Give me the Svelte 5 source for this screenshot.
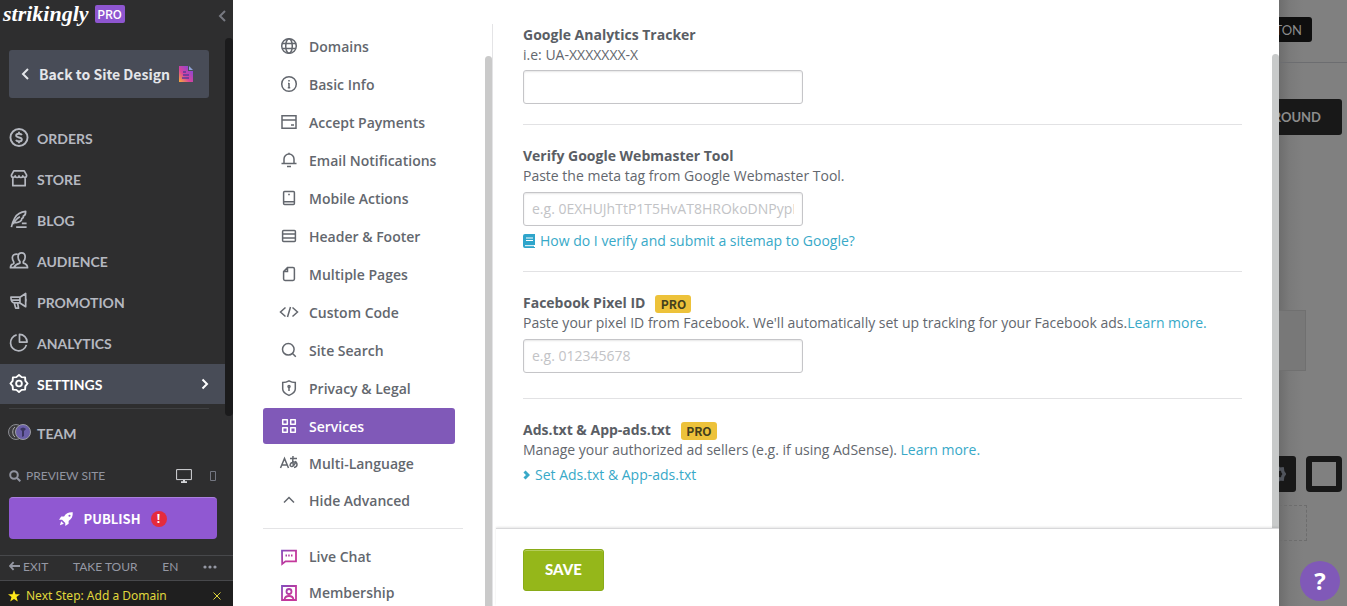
<script lang="ts">
  type Item = { id: string; label: string; icon: string };

  // Main sidebar, icons drawn on a 20x20 grid
  const mainNav: Item[] = [
    { id: 'orders', label: 'Orders', icon: '<circle cx="10" cy="10" r="9" stroke-width="2"/><path d="M13 7.500C12.600 6.400 11.500 6 10 6 8.300 6 7 6.700 7 8c0 2.700 6 1.300 6 4 0 1.300-1.300 2-3 2-1.500 0-2.700-.5-3-1.700M10 4v2M10 14v2" stroke-width="2"/>' },
    { id: 'store', label: 'Store', icon: '<path d="M4.500 2h11L18 6.500c0 3-3.500 3-4 .8-.6 2.200-3.400 2.200-4 0-.6 2.200-3.400 2.200-4 0-.5 2.200-4 2.200-4-.8zM3.500 9v8.500h13V9"/>' },
    { id: 'blog', label: 'Blog', icon: '<path d="M2 18c.5-3 1.500-6 3.500-9.500C8 4 11.500 2 17 1.500c0 3-1 4.500-2.500 5 .3 1-.4 2-1.500 2.500 0 2-2.500 4-7 4.500M4 15c1.500-3.500 4-6.500 7-8M7 18h11M13 14h5"/>' },
    { id: 'audience', label: 'Audience', icon: '<path d="M4.500 17.500H19c0-3-1.500-4-4.500-4.800v-1.500c1.600-1.500 2-3.200 2-5C16.500 3.500 15 2 12.800 2S9 3.500 9 6.200c0 1.800.6 3.500 2 5v1.500c-3.500.8-5 1.800-6.500 4.800zM4.500 17.500H1c0-2.700 1-3.500 3.500-4.300v-1.700C3.400 10 3 8.800 3 7.200 3 4.500 5 3 8.500 3.300"/>' },
    { id: 'promotion', label: 'Promotion', icon: '<path d="M1.500 5.500h9.500l6-4v14l-6-4H5.500c-2.500 0-4-2-4-6zM2 8.500h9M11 5.500v6M5 11.500l1.500 5.500h3l-1-5.500M17.300 7v3"/>' },
    { id: 'analytics', label: 'Analytics', icon: '<path d="M7.500 2a8.500 8.500 0 1 0 10.300 10.500M10.500 1.500a8 8 0 0 1 8 8h-8z"/>' },
    { id: 'settings', label: 'Settings', icon: '<path d="M10 1l2.800 2.300 3.600.3.300 3.600L19 10l-2.300 2.800-.3 3.600-3.600.3L10 19l-2.800-2.300-3.600-.3-.3-3.600L1 10l2.300-2.800.3-3.600 3.600-.3z" stroke-width="2"/><circle cx="10" cy="10" r="3" stroke-width="2"/>' },
  ];

  // Settings dialog menu, icons drawn on a 16x16 grid
  const basicMenu: Item[] = [
    { id: 'domains', label: 'Domains', icon: '<circle cx="8" cy="8" r="7.300"/><ellipse cx="8" cy="8" rx="3.300" ry="7.300"/><path d="M1.500 5.500h13M1.500 10.500h13"/>' },
    { id: 'basic', label: 'Basic Info', icon: '<circle cx="8" cy="8" r="7.300"/><path d="M8 7v5M7 7.500h1M6.800 11.700h2.400M8 4v1.500"/>' },
    { id: 'payments', label: 'Accept Payments', icon: '<path d="M1 1.700h14v12.600H1zM1 6h14M10 11h3"/>' },
    { id: 'email', label: 'Email Notifications', icon: '<path d="M.5 11.500h15M3 11.500V7a5 5 0 0 1 10 0v4.500M8 2V.8M6 14.500h4"/>' },
    { id: 'mobile', label: 'Mobile Actions', icon: '<rect x="2.600" y="1.600" width="10.800" height="12.800" rx="1"/><path d="M3 11.800h10M7.200 4.500h1.600"/>' },
    { id: 'header', label: 'Header & Footer', icon: '<rect x="1.600" y="2.600" width="12.800" height="10.800" rx="1"/><path d="M2 6h12M2 10h12"/>' },
    { id: 'pages', label: 'Multiple Pages', icon: '<path d="M6.500 1.600H12q1.400 0 1.400 1.400v10q0 1.400-1.400 1.400H4q-1.400 0-1.400-1.400V5.500zM6.500 1.600v3.900H2.600"/>' },
    { id: 'code', label: 'Custom Code', icon: '<path d="M4.500 3.500L-.5 8l5 4.500M11.500 3.500l5 4.500-5 4.500M9.500 3l-3 10"/>' },
    { id: 'search', label: 'Site Search', icon: '<circle cx="7.300" cy="7.300" r="5.800"/><path d="M11.500 11.500l3.300 3.300"/>' },
    { id: 'privacy', label: 'Privacy & Legal', icon: '<path d="M8 .8c2 1.200 4 1.700 6.300 1.700v6.500c0 3-2.300 4.700-6.300 6.400-4-1.700-6.300-3.400-6.300-6.400V2.500C4 2.500 6 2 8 .8zM8 7v4"/><circle cx="8" cy="6.500" r="1"/>' },
    { id: 'services', label: 'Services', icon: '<path d="M1.700 1.700h4.600v4.600H1.700zM9.700 1.700h4.600v4.600H9.700zM1.700 9.700h4.600v4.600H1.700zM9.700 9.700h4.600v4.600H9.700z" stroke-linejoin="round"/>' },
  ];

  const advancedMenu: Item[] = [
    { id: 'language', label: 'Multi-Language', icon: '<path d="M-.5 13L3.500 3.500 7.500 13M1 10h5M9 3.500h7M12 1c-.5 4-.5 7 .5 10M15 6c-1 3-2.500 5.500-4.500 5.500C8 11.500 9 7 13 7c4 0 4 5 0 5.500"/>' },
    { id: 'hide', label: 'Hide Advanced', icon: '<path d="M3 10.500l5-5 5 5"/>' },
  ];

  const appMenu: Item[] = [
    { id: 'chat', label: 'Live Chat', icon: '<path d="M1 1.600h14v10.800H4.500L1.200 15zM4.500 6.500h1.500M7.200 6.500h1.500M10 6.500h1.500" stroke-width="1.800"/>' },
    { id: 'membership', label: 'Membership', icon: '<path d="M1 1h14v14H1zM3.500 14.500c.3-2.300 2-3.500 4.500-3.500s4.200 1.200 4.500 3.500" stroke-width="1.800"/><circle cx="8" cy="6.500" r="2.500" stroke-width="1.800"/>' },
  ];

  let activeNav = $state('settings');
  let activeMenu = $state('services');
  let tracker = $state('');
  let metaTag = $state('');
  let pixelId = $state('');
</script>

{#snippet menuList(items: Item[], kind: string)}
  <ul class="menu-group {kind}">
    {#each items as item}
      <li>
        <button class="menu-item" class:active={activeMenu === item.id} onclick={() => (activeMenu = item.id)}>
          <svg class="menu-icon" viewBox="0 0 16 16">{@html item.icon}</svg>
          <span>{item.label}</span>
        </button>
      </li>
    {/each}
  </ul>
{/snippet}

<div class="app">
  <aside class="sidebar">
    <header class="brand">
      <a class="logo" href="/">strikingly</a>
      <span class="plan">PRO</span>
      <button class="collapse" aria-label="Collapse sidebar">
        <svg viewBox="0 0 8 12"><path d="M7 1L2 6l5 5" /></svg>
      </button>
    </header>

    <div class="sidebar-scroll">
      <div class="sidebar-body">
        <button class="back">
          <svg class="back-arrow" viewBox="0 0 8 12"><path d="M7 1L2 6l5 5" /></svg>
          Back to Site Design
          <svg class="back-doc" viewBox="0 0 16 16">
            <defs>
              <linearGradient id="doc" x1="0" y1="1" x2="1" y2="0">
                <stop offset="0" stop-color="#f9b233" />
                <stop offset="0.4" stop-color="#d9439b" />
                <stop offset="1" stop-color="#7048e8" />
              </linearGradient>
            </defs>
            <path d="M1 0h9v5h5v11H1z" fill="url(#doc)" />
            <path d="M11 0l4 4h-4z" fill="#8ea2d8" />
            <path d="M5 6h3M5 9h6M4 12h7" stroke="#5b3a9c" stroke-width="1.500" />
          </svg>
        </button>

        <nav>
          {#each mainNav as item}
            <a class="nav-item" class:active={activeNav === item.id} href="#{item.id}" onclick={() => (activeNav = item.id)}>
              <svg class="nav-icon" viewBox="0 0 20 20">{@html item.icon}</svg>
              <span>{item.label}</span>
              {#if activeNav === item.id}
                <svg class="nav-arrow" viewBox="0 0 8 12"><path d="M1.500 1.500L6 6l-4.500 4.500" /></svg>
              {/if}
            </a>
          {/each}
          <hr />
          <a class="nav-item team" href="#team">
            <svg class="team-icon" viewBox="0 0 24 18">
              <circle cx="8" cy="8" r="7.500" fill="#3c3c3f" stroke="#8c8d92" />
              <path d="M7 3C4 5 4 11 7 13M10 4C7 6 8 10 10 12" stroke="#aaa" fill="none" />
              <circle cx="15" cy="8" r="7.500" fill="#6a5fa8" stroke="#9c9da3" />
              <path d="M12 5q3-3 6 0l-2 2v5l-2 1V7z" fill="#3a3560" stroke="none" />
            </svg>
            <span>Team</span>
          </a>
        </nav>
      </div>
      <div class="sidebar-thumb"></div>
    </div>

    <div class="preview">
      <svg class="lens" viewBox="0 0 12 12"><circle cx="5" cy="5" r="3.800" /><path d="M8 8l3.300 3.300" /></svg>
      <a href="#preview">PREVIEW SITE</a>
      <button class="desktop" aria-label="Desktop preview">
        <svg viewBox="0 0 16 14"><path d="M.6.6h14.800v10H.6z" /><path d="M5 13.300h6M8 11v2" stroke-width="2" /></svg>
      </button>
      <button class="phone" aria-label="Mobile preview">
        <svg viewBox="0 0 6 12"><path d="M.5 1.500h5v9h-5z" /></svg>
      </button>
    </div>

    <button class="publish">
      <svg class="rocket" viewBox="0 0 16 16">
        <path fill-rule="evenodd" d="M15.700.3C11 0 8 1.500 5.800 5H2.500L0 8.800h3.500l3.700 3.700V16L11 13.500v-3.300C14.500 8 16 5 15.700.3zM12 3a1.200 1.200 0 1 1 0 2.400A1.200 1.200 0 0 1 12 3zM2.500 10.500L1 15l4.500-1.500z" />
      </svg>
      PUBLISH
      <span class="alert">!</span>
    </button>

    <div class="links">
      <a class="exit" href="#exit">
        <svg viewBox="0 0 12 10"><path d="M5 .8L1 5l4 4.200M1 5h11" /></svg>
        EXIT
      </a>
      <a href="#tour">TAKE TOUR</a>
      <a href="#lang">EN</a>
      <button class="more" aria-label="More">
        <svg viewBox="0 0 14 4"><circle cx="2" cy="2" r="1.600" /><circle cx="7" cy="2" r="1.600" /><circle cx="12" cy="2" r="1.600" /></svg>
      </button>
    </div>

    <div class="next-step">
      <svg class="star" viewBox="0 0 12 12"><path d="M6 0l1.500 4.200H12L8.500 7l1.300 4.500L6 8.900l-3.800 2.600L3.500 7 0 4.200h4.500z" /></svg>
      <a href="#domain">Next Step: Add a Domain</a>
      <button aria-label="Dismiss">
        <svg viewBox="0 0 8 8"><path d="M.5.5l7 7M7.500.5l-7 7" /></svg>
      </button>
    </div>
  </aside>

  <main class="dialog">
    <svg class="defs" width="0" height="0">
      <linearGradient id="appIcon" gradientUnits="userSpaceOnUse" x1="0" y1="0" x2="16" y2="16">
        <stop offset="0" stop-color="#7d4fc0" />
        <stop offset="0.6" stop-color="#c4379b" />
      </linearGradient>
    </svg>
    <div class="menu">
      <div class="menu-body">
        {@render menuList(basicMenu, 'basic')}
        {@render menuList(advancedMenu, 'advanced')}
        <hr />
        {@render menuList(appMenu, 'apps')}
      </div>
      <div class="menu-thumb"></div>
    </div>

    <form class="content" onsubmit={(e) => e.preventDefault()}>
      <div class="content-scroll">
        <div class="fields">
          <section>
            <label for="tracker">Google Analytics Tracker</label>
            <p>i.e: UA-XXXXXXX-X</p>
            <input id="tracker" type="text" bind:value={tracker} />
          </section>
          <section>
            <label for="meta">Verify Google Webmaster Tool</label>
            <p>Paste the meta tag from Google Webmaster Tool.</p>
            <input id="meta" type="text" placeholder="e.g. 0EXHUJhTtP1T5HvAT8HROkoDNPypI" bind:value={metaTag} />
            <a class="help-link" href="#sitemap">
              <svg class="book" viewBox="0 0 12 14">
                <path d="M2 0h10v11h-1v2h1v1H2q-2 0-2-2V2q0-2 2-2z" />
                <path d="M3 4h7M3 6.500h7M2 11.700h9" stroke="#fff" />
              </svg>
              How do I verify and submit a sitemap to Google?
            </a>
          </section>
          <section class="roomy">
            <label for="pixel">Facebook Pixel ID <span class="badge">PRO</span></label>
            <p>
              Paste your pixel ID from Facebook. We'll automatically set up tracking for your Facebook ads.<a href="#pixel">Learn more.</a>
            </p>
            <input id="pixel" type="text" placeholder="e.g. 012345678" bind:value={pixelId} />
          </section>
          <section>
            <h3>Ads.txt &amp; App-ads.txt <span class="badge">PRO</span></h3>
            <p>Manage your authorized ad sellers (e.g. if using AdSense). <a href="#ads">Learn more.</a></p>
            <a class="help-link" href="#set-ads">
              <svg class="caret" viewBox="0 0 7 10"><path d="M1.500 1.500L5 5 1.500 8.500" /></svg>
              Set Ads.txt &amp; App-ads.txt
            </a>
          </section>
        </div>
        <div class="content-thumb"></div>
      </div>
      <footer>
        <button class="save" type="submit">SAVE</button>
      </footer>
    </form>
  </main>

  <div class="canvas">
    <div class="canvas-top"><span class="chip">TON</span></div>
    <span class="chip large">ROUND</span>
    <div class="block"></div>
    <div class="tools">
      <span class="tool">
        <svg viewBox="0 0 20 20"><path d="M10 2l2 2 3.500-.5.5 3.500 2 3-2 3-.5 3.500L12 16l-2 2-2-2-3.500.5L4 13l-2-3 2-3 .5-3.500L8 4z" /></svg>
      </span>
      <span class="tool square"></span>
    </div>
    <div class="dashed"></div>
    <button class="help" aria-label="Help">?</button>
  </div>
</div>

<style>
  :global(body) {
    margin: 0;
  }

  .app {
    display: grid;
    grid-template-columns: 233px 1fr 68px;
    height: 100vh;
    overflow: hidden;
    font: 14px/20px 'Open Sans', sans-serif;
    color: #63676e;
  }

  .app * {
    box-sizing: border-box;
  }

  button {
    padding: 0;
    border: 0;
    background: none;
    color: inherit;
    font: inherit;
    cursor: pointer;
  }

  a {
    color: inherit;
    text-decoration: none;
  }

  svg {
    flex: none;
    fill: none;
    stroke: currentColor;
  }

  hr {
    height: 1px;
    margin: 0;
    border: 0;
  }

  /* Sidebar */
  .sidebar {
    display: flex;
    flex-direction: column;
    min-height: 0;
    background: #2e2e2f;
    color: #b5b8c0;
    font-family: Lato, sans-serif;
  }

  .brand {
    display: flex;
    align-items: center;
    flex: none;
    height: 28px;
    margin-bottom: 10px;
    padding: 0 7px 0 3px;
  }

  .logo {
    color: #fff;
    font: italic bold 22px/26px 'Liberation Serif', serif;
  }

  .plan {
    width: 30px;
    margin-left: 6px;
    border-radius: 2px;
    background: #8e56d0;
    color: #fff;
    font: 500 12px/18px 'Noto Sans CJK SC', sans-serif;
    text-align: center;
  }

  .collapse {
    height: 12px;
    margin: 4px 0 0 auto;
    color: #777981;
  }

  .collapse svg {
    display: block;
    width: 8px;
    height: 12px;
    stroke-width: 2;
  }

  .sidebar-scroll {
    display: flex;
    flex: 1;
    min-height: 0;
    overflow: hidden;
  }

  .sidebar-body {
    flex: 1;
    padding-top: 12px;
  }

  .sidebar-thumb {
    width: 8px;
    height: 378px;
    border-radius: 4px;
    background: #1b1b1c;
  }

  .back {
    display: flex;
    align-items: center;
    width: 200px;
    height: 48px;
    margin: 0 0 20px 9px;
    padding-left: 12px;
    border-radius: 3px;
    background: #484c57;
    color: #e4e6ea;
    font: bold 14px/20px 'Noto Sans CJK SC', sans-serif;
  }

  .back-arrow {
    width: 8px;
    height: 12px;
    margin-right: 10px;
    stroke-width: 2;
  }

  .back-doc {
    width: 16px;
    height: 16px;
    margin-left: 8px;
    stroke: none;
  }

  .nav-item {
    display: flex;
    align-items: center;
    height: 40px;
    margin-bottom: 1px;
    padding: 0 16px 0 9px;
    font-size: 14px;
    font-weight: bold;
    text-transform: uppercase;
  }

  .nav-item.active {
    background: #484c57;
    color: #fff;
  }

  .nav-icon {
    width: 20px;
    height: 20px;
    margin-right: 8px;
    padding-bottom: 1px;
    stroke-width: 1.800;
    stroke-linejoin: round;
  }

  .nav-arrow {
    width: 8px;
    height: 12px;
    margin-left: auto;
    stroke-width: 2;
  }

  .nav-item span {
    padding-top: 2px;
  }

  .sidebar hr {
    width: 200px;
    margin: 4px 0 4px 9px;
    background: #3f4042;
  }

  .team {
    padding-left: 8px;
  }

  .team-icon {
    width: 24px;
    height: 18px;
    margin-right: 5px;
  }

  .preview {
    display: flex;
    align-items: center;
    height: 26px;
    margin-bottom: 8px;
    padding: 0 17px 0 9px;
    color: #9194a0;
    font-size: 12px;
  }

  .lens {
    width: 12px;
    height: 12px;
    margin-right: 5px;
    stroke-width: 2;
  }

  .desktop {
    height: 14px;
    margin-left: auto;
    color: #d6d7da;
  }

  .desktop svg {
    display: block;
    width: 16px;
    height: 14px;
  }

  .phone {
    height: 12px;
    margin-left: 18px;
    color: #737681;
  }

  .phone svg {
    display: block;
    width: 6px;
    height: 12px;
  }

  .publish {
    display: flex;
    align-items: center;
    justify-content: center;
    flex: none;
    height: 42px;
    margin: 0 16px 16px 9px;
    border-top: 1px solid #ab80de;
    border-radius: 4px;
    background: #9058d2;
    color: #fff;
    font: bold 13px/20px 'Noto Sans CJK SC', sans-serif;
  }

  .rocket {
    width: 14px;
    height: 14px;
    margin-right: 10px;
    fill: #fff;
    stroke: none;
  }

  .alert {
    width: 16px;
    margin-left: 10px;
    border-radius: 8px;
    background: #e52b3d;
    font: bold 12px/16px 'Open Sans', sans-serif;
  }

  .links {
    display: flex;
    align-items: center;
    justify-content: space-between;
    height: 25px;
    padding: 0 16px 2px 9px;
    border-top: 1px solid #47484b;
    color: #9598a4;
    font-size: 12px;
  }

  .exit svg {
    width: 11px;
    height: 10px;
    stroke-width: 2;
  }

  .more svg {
    display: block;
    width: 14px;
    height: 4px;
    fill: currentColor;
    stroke: none;
  }

  .next-step {
    display: flex;
    align-items: center;
    flex: none;
    height: 26px;
    padding: 4px 12px 0 8px;
    border-top: 1px solid #47484b;
    background: #1f1f1f;
    color: #e0d83c;
    font: 12px/20px 'Noto Sans', sans-serif;
  }

  .star {
    width: 12px;
    height: 12px;
    margin-right: 6px;
    fill: #ffe81a;
    stroke: none;
  }

  .next-step button {
    margin-left: auto;
  }

  .next-step button svg {
    display: block;
    width: 8px;
    height: 8px;
  }

  /* Settings dialog */
  .dialog {
    display: flex;
    min-width: 0;
    min-height: 0;
    background: #fff;
  }

  .defs {
    position: absolute;
  }

  .menu {
    display: flex;
    justify-content: space-between;
    width: 260px;
    margin-top: 24px;
    padding-left: 30px;
    border-right: 1px solid #e4e4e6;
    overflow: hidden;
  }

  .menu-body {
    width: 200px;
    padding-top: 4px;
  }

  .menu-thumb {
    width: 7px;
    margin-top: 32px;
    border-radius: 4px 4px 0 0;
    background: #cacaca;
  }

  .menu-group {
    display: flex;
    flex-direction: column;
    margin: 0;
    padding: 0;
    list-style: none;
  }

  .basic {
    gap: 2px;
  }

  .advanced {
    gap: 1px;
    padding: 1px 0 10px;
  }

  .apps {
    padding-top: 10px;
  }

  .menu hr {
    background: #e4e4e6;
  }

  .menu-item {
    display: flex;
    align-items: center;
    gap: 12px;
    width: 192px;
    height: 36px;
    padding-left: 18px;
    border-radius: 3px;
    font-weight: 600;
    text-align: left;
  }

  .menu-item span {
    padding-top: 2px;
  }

  .apps .menu-item span {
    padding-top: 0;
  }

  .menu-item.active {
    background: #8059b8;
    color: #fff;
  }

  .menu-icon {
    width: 16px;
    height: 16px;
    stroke-width: 1.500;
    overflow: visible;
  }

  .apps .menu-icon {
    stroke: url(#appIcon);
  }

  .content {
    display: flex;
    flex: 1;
    flex-direction: column;
    min-width: 0;
  }

  .content-scroll {
    display: flex;
    flex: 1;
    min-height: 0;
    overflow: hidden;
  }

  .fields {
    flex: 1;
    min-width: 0;
    padding: 3px 30px 0;
  }

  .content-thumb {
    width: 7px;
    margin-top: 54px;
    border-radius: 4px 4px 0 0;
    background: #c8caca;
  }

  section {
    padding: 21px 0 20px;
    border-bottom: 1px solid #e2e2e4;
  }

  section:first-child {
    padding-top: 22px;
  }

  section:first-child input {
    margin-top: 5px;
  }

  section.roomy {
    padding-bottom: 25px;
  }

  section:last-child {
    border-bottom: 0;
  }

  label,
  h3 {
    display: flex;
    align-items: center;
    gap: 10px;
    margin: 0;
    color: #5a5e65;
    font-size: 14px;
    font-weight: bold;
    line-height: 20px;
  }

  p {
    margin: 0;
  }

  .badge {
    width: 36px;
    margin-top: 2px;
    border-radius: 3px;
    background: #edc23a;
    color: #43401d;
    font: bold 12px/18px 'Noto Sans CJK SC', sans-serif;
    text-align: center;
  }

  input {
    display: block;
    width: 280px;
    height: 34px;
    margin-top: 6px;
    padding: 0 8px 2px;
    border: 1px solid #c5c5c8;
    border-radius: 3px;
    box-shadow: inset 0 1px 2px rgba(0, 0, 0, 0.1);
    color: #63676e;
    font: inherit;
  }

  input::placeholder {
    color: #c2c3c6;
  }

  p a,
  .help-link {
    color: #38a9c8;
  }

  .help-link {
    display: flex;
    align-items: center;
    gap: 5px;
    margin-top: 5px;
  }

  .book {
    width: 12px;
    height: 14px;
    fill: #2fa5cb;
    stroke: none;
  }

  .caret {
    width: 7px;
    height: 10px;
    stroke-width: 3;
  }

  footer {
    flex: none;
    height: 78px;
    margin-left: 3px;
    padding: 20px 27px 0;
    border-top: 1px solid #d8d8da;
    box-shadow: 0 -1px 2px rgba(0, 0, 0, 0.1);
  }

  .save {
    width: 81px;
    height: 42px;
    padding-bottom: 2px;
    border: 1px solid #89ab18;
    border-radius: 3px;
    background: #95b71a;
    box-shadow: inset 0 1px 0 #b4cd5c;
    color: #fff;
    font: 900 15px/20px Lato, sans-serif;
  }

  /* Dimmed site behind the dialog */
  .canvas {
    position: relative;
    display: flex;
    flex-direction: column;
    background: linear-gradient(90deg, #6d6d6d, #7a7a7a 10px, #808080 24px);
    color: #8c8c8c;
    overflow: hidden;
  }

  .canvas-top {
    display: flex;
    flex: none;
    height: 63px;
    padding-top: 17px;
    border-bottom: 1px solid #6c6d70;
  }

  .chip {
    display: flex;
    align-items: center;
    justify-content: flex-end;
    width: 33px;
    height: 25px;
    padding-right: 10px;
    border-radius: 0 3px 3px 0;
    background: #0e0e0e;
    font: 13px/20px Lato, sans-serif;
  }

  .chip.large {
    flex: none;
    width: 63px;
    height: 36px;
    margin: 36px 0 175px;
    padding-right: 21px;
    background: #181818;
    font-weight: bold;
  }

  .block {
    flex: none;
    width: 27px;
    height: 61px;
    border: 1px solid #707070;
    border-left: 0;
    background: #787878;
  }

  .tools {
    display: flex;
    gap: 10px;
    margin: 85px 0 13px;
  }

  .tool {
    display: flex;
    align-items: center;
    justify-content: flex-end;
    width: 17px;
    height: 36px;
    padding-right: 10px;
    border-radius: 0 3px 3px 0;
    background: #181818;
    color: #50545c;
    overflow: hidden;
  }

  .tool svg {
    width: 16px;
    height: 16px;
    stroke-width: 4;
  }

  .tool.square {
    width: 36px;
    border: 6px solid #181818;
    border-radius: 4px;
    background: #808080;
  }

  .dashed {
    flex: none;
    width: 28px;
    height: 36px;
    border: 1px dashed #6d6d6d;
    border-left: 0;
  }

  .help {
    position: absolute;
    right: 7px;
    bottom: 5px;
    width: 40px;
    height: 40px;
    border-radius: 50%;
    background: #8059b8;
    color: #fff;
    font: bold 24px/40px 'Open Sans', sans-serif;
  }
</style>
